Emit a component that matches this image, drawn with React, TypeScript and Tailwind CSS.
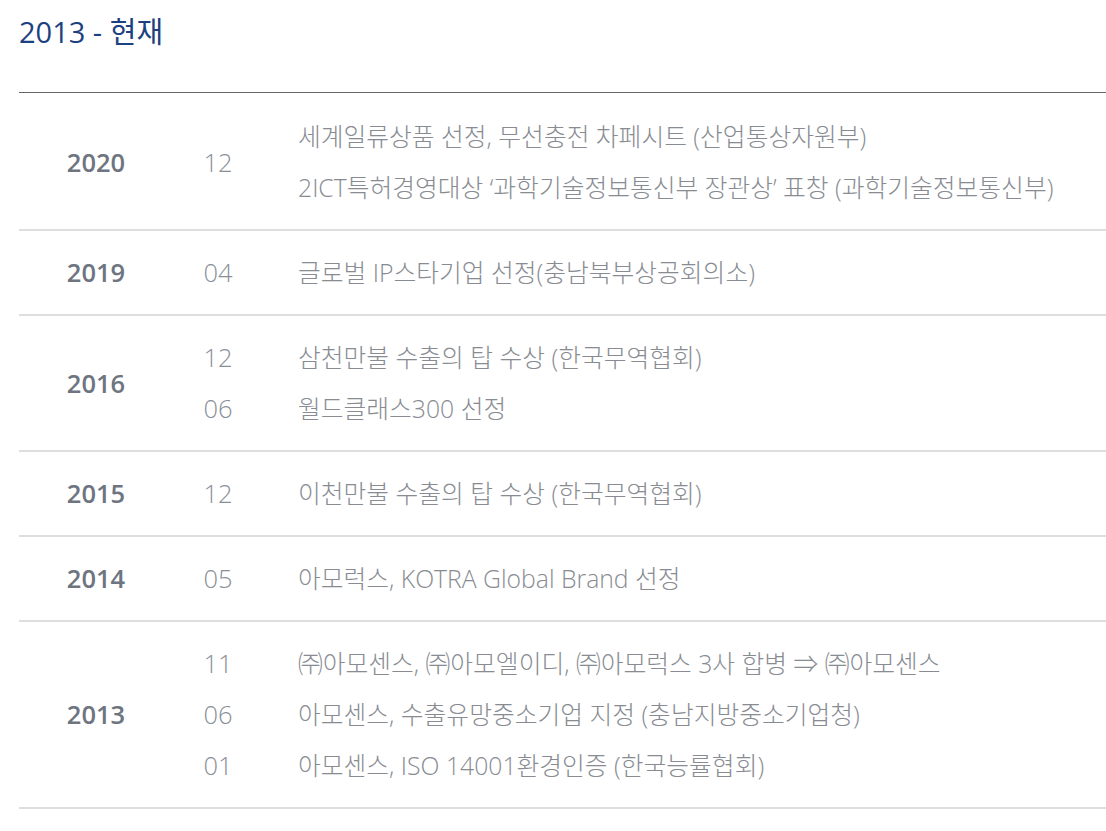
const font = "font-['Open_Sans','Noto_Sans_CJK_KR',sans-serif]";

type Item = { month: string; text: string };
type Row = { year: string; items: Item[] };

const rows: Row[] = [
  {
    year: "2020",
    items: [
      { month: "12", text: "세계일류상품 선정, 무선충전 차페시트 (산업통상자원부)" },
      { month: "", text: "2ICT특허경영대상 ‘과학기술정보통신부 장관상’ 표창 (과학기술정보통신부)" },
    ],
  },
  { year: "2019", items: [{ month: "04", text: "글로벌 IP스타기업 선정(충남북부상공회의소)" }] },
  {
    year: "2016",
    items: [
      { month: "12", text: "삼천만불 수출의 탑 수상 (한국무역협회)" },
      { month: "06", text: "월드클래스300 선정" },
    ],
  },
  { year: "2015", items: [{ month: "12", text: "이천만불 수출의 탑 수상 (한국무역협회)" }] },
  { year: "2014", items: [{ month: "05", text: "아모럭스, KOTRA Global Brand 선정" }] },
  {
    year: "2013",
    items: [
      { month: "11", text: "㈜아모센스, ㈜아모엘이디, ㈜아모럭스 3사 합병 ⇒ ㈜아모센스" },
      { month: "06", text: "아모센스, 수출유망중소기업 지정 (충남지방중소기업청)" },
      { month: "01", text: "아모센스, ISO 14001환경인증 (한국능률협회)" },
    ],
  },
];

function HistoryRow({ row }: { row: Row }) {
  // 2020 has one month spanning two lines
  const shared = row.items.length === 2 && row.items[1].month === "";
  return (
    <div className="flex items-center border-b-2 border-[#dedede] py-[16px] first:pt-[18px]">
      <div className="w-[154px] text-center text-[25.5px] font-semibold text-[#6e7580]">{row.year}</div>
      <div className="flex flex-col">
        {shared ? (
          <div className="flex items-center">
            <div className="w-[90px] text-center text-[25.5px] font-light text-[#8a8f97]">{row.items[0].month}</div>
            <div className="pl-[35px] flex flex-col">
              {row.items.map((it, i) => (
                <div key={i} className="leading-[51px] text-[24.75px] font-light text-[#888c92]">
                  {it.text}
                </div>
              ))}
            </div>
          </div>
        ) : (
          row.items.map((it, i) => (
            <div key={i} className="flex items-center leading-[51px]">
              <div className="w-[90px] text-center text-[25.5px] font-light text-[#8a8f97]">{it.month}</div>
              <div className="pl-[35px] text-[24.75px] font-light text-[#888c92]">{it.text}</div>
            </div>
          ))
        )}
      </div>
    </div>
  );
}

export default function App() {
  return (
    <div className={`${font} bg-white min-h-[831px] pl-[19px]`}>
      <h2 className="pt-[14px] text-[29px] leading-[36px] font-normal text-[#1d4180]">2013 - 현재</h2>
      <div className="mt-[42px] border-t border-[#666]">
        {rows.map((r) => (
          <HistoryRow key={r.year} row={r} />
        ))}
      </div>
    </div>
  );
}
